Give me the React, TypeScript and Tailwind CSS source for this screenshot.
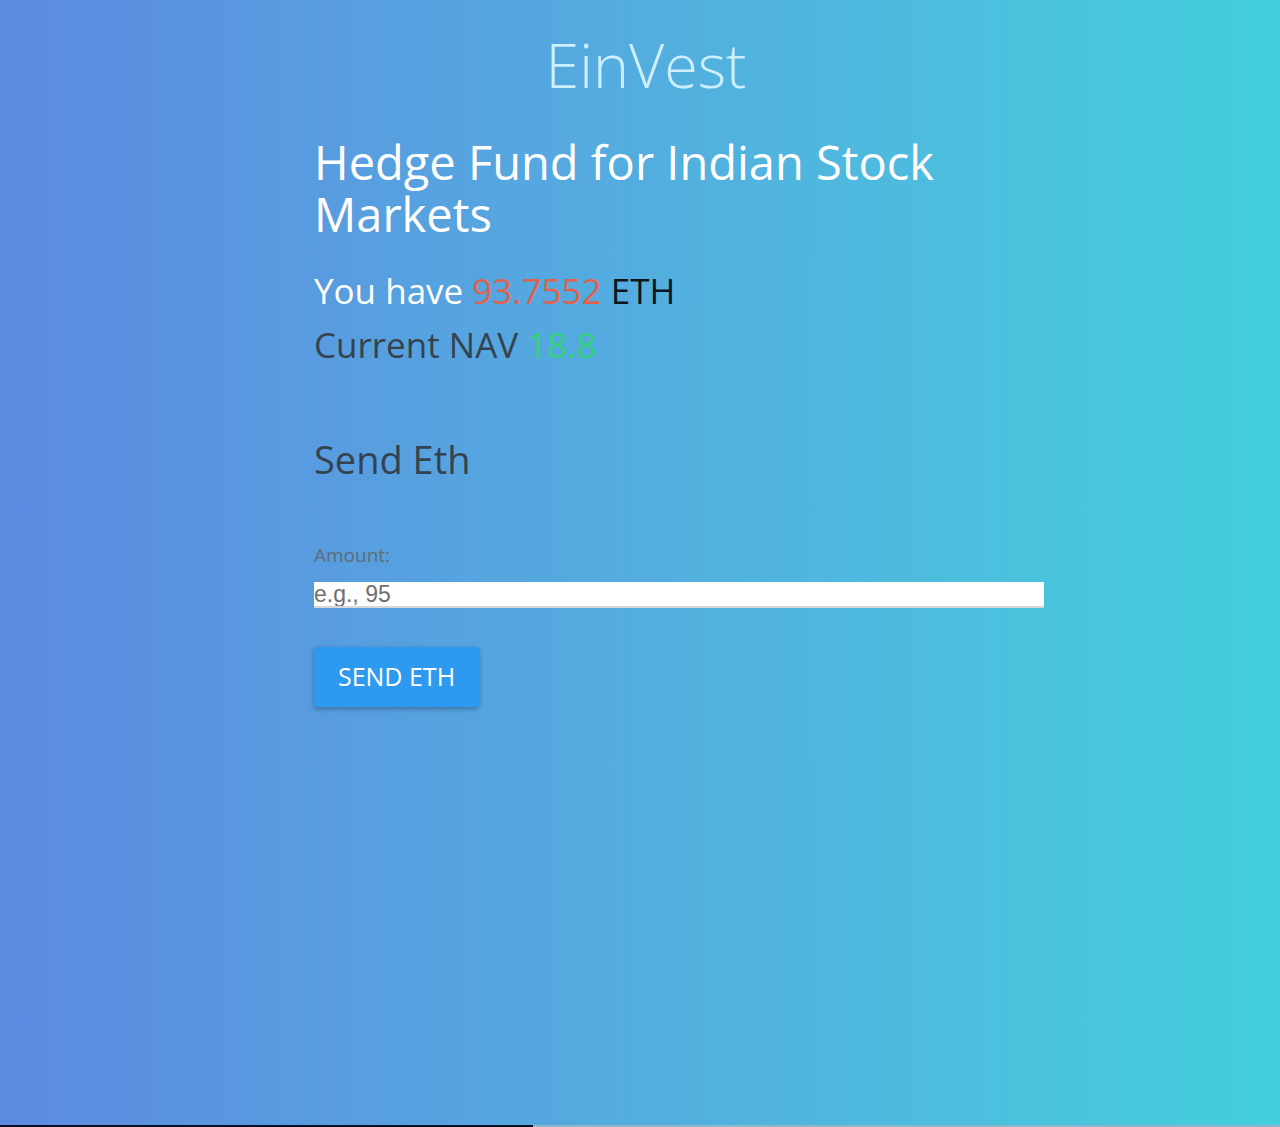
import React, { useState } from 'react';

const font = { fontFamily: '"Open Sans", "Noto Sans", sans-serif' };

export default function App(): JSX.Element {
  const [amount, setAmount] = useState('');

  return (
    <div
      className="relative min-h-[1127px] w-full bg-gradient-to-r from-[#5c8ae0] to-[#43cfdc] font-['Open_Sans',sans-serif]"
      style={font}
    >
      <header className="pt-[27px] pl-[314px] w-[978px]">
        <h1 className="text-center text-[61px] leading-[76px] font-light text-[#cdeefb]">EinVest</h1>
      </header>

      <main className="pl-[314px] w-[1044px]">
        <h2 className="mt-[33px] text-[47px] leading-[52px] text-white">
          Hedge Fund for Indian Stock Markets
        </h2>

        <p className="mt-[24px] text-[35px] leading-[54px] text-white">
          You have <span className="text-[#e0624c]">93.7552</span> <span className="text-[#0d1520]">ETH</span>
        </p>
        <p className="text-[35px] leading-[54px] text-[#35434f]">
          Current NAV <span className="text-[#35d27d]">18.8</span>
        </p>

        <h3 className="mt-[62px] text-[38px] leading-[50px] text-[#35434f]">Send Eth</h3>

        <form className="mt-[59px] flex flex-col" onSubmit={(e) => e.preventDefault()}>
          <label className="text-[19px] leading-[24px] text-[#5d6c78]">Amount:</label>
          <input
            value={amount}
            onChange={(e) => setAmount(e.target.value)}
            placeholder="e.g., 95"
            className="mt-[15px] h-[26px] w-[730px] bg-white border-b-2 border-[#d4d8dc] text-[23px] leading-[24px] text-[#333] placeholder:text-[#6f6f6f] outline-none font-['Liberation_Sans',Arial,sans-serif]"
          />
          <button
            type="submit"
            className="mt-[39px] h-[60px] w-[165px] rounded-[3px] bg-[#2d99ef] text-[25px] text-white shadow-[0_2px_5px_rgba(0,0,0,0.3)]"
          >
            SEND ETH
          </button>
        </form>
      </main>

      <div className="absolute bottom-0 left-0 right-0 flex h-[2px]">
        <div className="w-[533px] bg-[#0a1020]" />
        <div className="flex-1 bg-[#8fb6c8]" />
      </div>
    </div>
  );
}
